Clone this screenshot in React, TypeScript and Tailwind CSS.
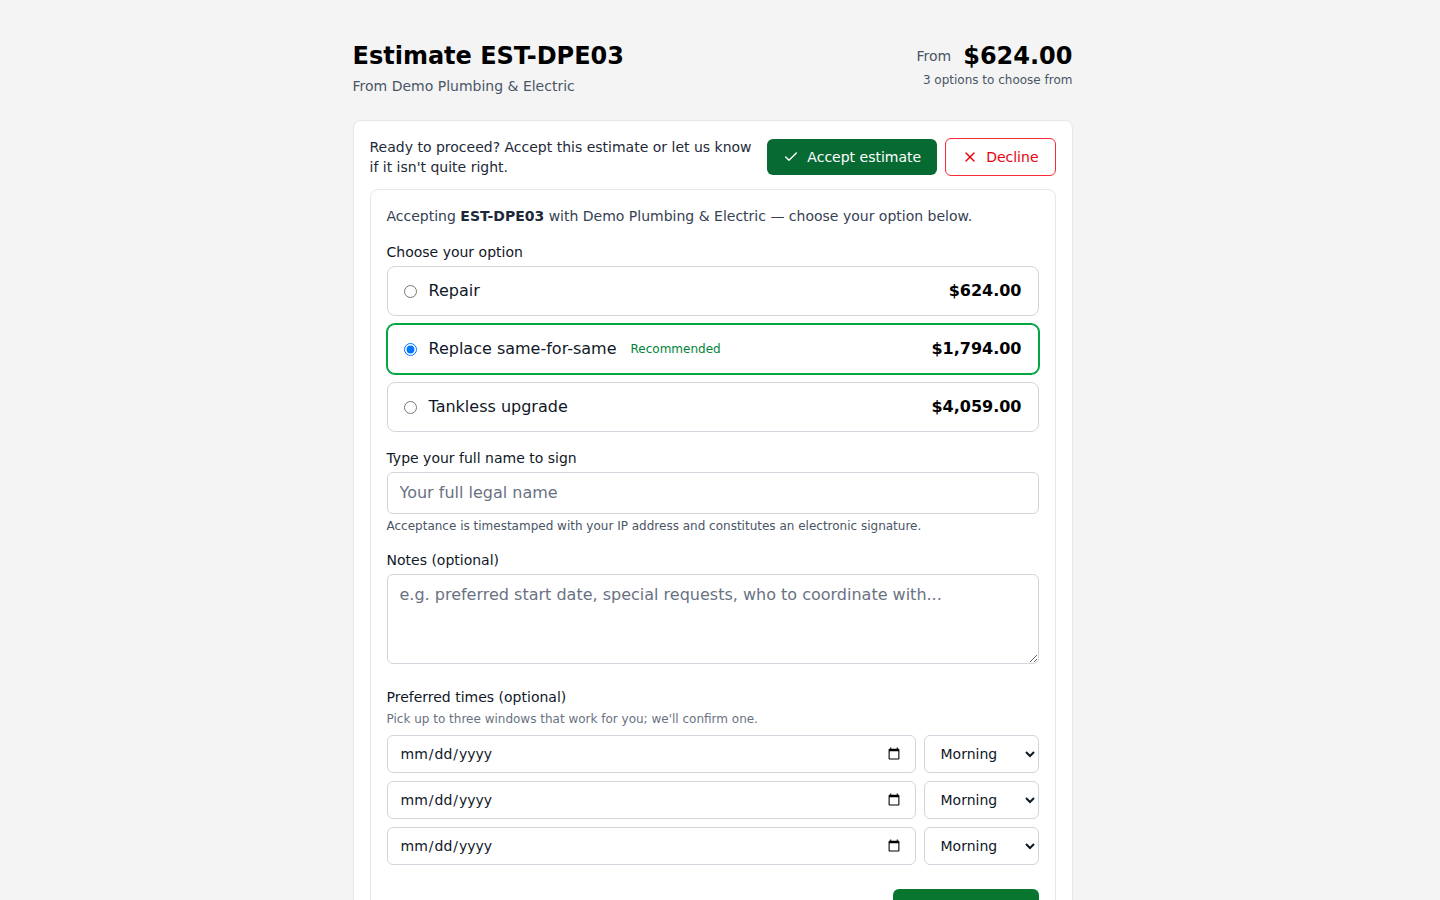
import { Check, X } from "lucide-react";

const options = [
  { id: "repair", name: "Repair", price: "$624.00", recommended: false },
  { id: "replace", name: "Replace same-for-same", price: "$1,794.00", recommended: true },
  { id: "tankless", name: "Tankless upgrade", price: "$4,059.00", recommended: false },
];

const details = [
  {
    name: "Repair",
    price: "$624.00",
    items: [
      ["Diagnostic & service call", "$89.00"],
      ["Replace thermocouple and gas valve", "$385.00"],
      ["Flush tank, test relief valve", "$150.00"],
    ],
  },
  {
    name: "Replace same-for-same",
    price: "$1,794.00",
    items: [
      ["50 gal gas water heater", "$1,120.00"],
      ["Installation labor", "$480.00"],
      ["Haul away & disposal of old unit", "$94.00"],
      ["Permit & inspection", "$100.00"],
    ],
  },
  {
    name: "Tankless upgrade",
    price: "$4,059.00",
    items: [
      ["Tankless condensing water heater", "$2,450.00"],
      ["Gas line upsizing", "$640.00"],
      ["Venting kit & installation labor", "$775.00"],
      ["Permit & inspection", "$194.00"],
    ],
  },
];

const TimeRow = () => (
  <div className="flex gap-2">
    <input
      type="date"
      className="h-[38px] flex-1 rounded-md border border-gray-300 bg-white px-3 text-sm text-gray-900"
    />
    <select className="h-[38px] w-[115px] rounded-md border border-gray-300 bg-white px-3 text-sm text-gray-900">
      <option>Morning</option>
      <option>Afternoon</option>
      <option>Evening</option>
    </select>
  </div>
);

export default function App() {
  return (
    <div
      className="h-screen overflow-y-auto bg-[#f4f4f4] pr-[15px] text-gray-900"
      style={{ fontFamily: '"DejaVu Sans", "Noto Sans", sans-serif' }}
    >
      <div className="mx-auto max-w-3xl px-6 pt-10 pb-16">
        <header className="mb-6 flex items-start justify-between">
          <div>
            <h1 className="text-2xl font-bold leading-8 text-black">Estimate EST-DPE03</h1>
            <p className="mt-1 text-sm text-gray-600">From Demo Plumbing &amp; Electric</p>
          </div>
          <div className="text-right">
            <div className="flex items-center justify-end gap-3">
              <span className="text-sm text-gray-600">From</span>
              <span className="text-2xl font-bold leading-8 text-black">$624.00</span>
            </div>
            <p className="text-xs text-gray-600">3 options to choose from</p>
          </div>
        </header>

        <section className="rounded-lg border border-gray-200 bg-white p-4">
          <div className="flex items-center gap-3">
            <p className="flex-1 text-sm leading-5 text-gray-800">
              Ready to proceed? Accept this estimate or let us know if it isn't quite right.
            </p>
            <div className="flex shrink-0 items-center gap-2">
              <button className="flex h-9 items-center gap-2 rounded-md bg-[#086a33] px-4 text-sm text-white">
                <Check size={16} strokeWidth={2} />
                Accept estimate
              </button>
              <button className="flex h-[38px] items-center gap-2 rounded-md border border-red-500 bg-white px-4 text-sm text-red-600">
                <X size={16} strokeWidth={2} />
                Decline
              </button>
            </div>
          </div>

          <div className="mt-3 rounded-lg border border-gray-200 p-4">
            <p className="text-sm leading-5 text-gray-700">
              Accepting <b className="text-gray-800">EST-DPE03</b> with Demo Plumbing &amp; Electric — choose
              your option below.
            </p>

            <p className="mt-4 mb-1 text-sm leading-5 font-medium text-gray-900">Choose your option</p>
            <div className="flex flex-col gap-2">
              {options.map((o) => (
                <label
                  key={o.id}
                  className={
                    o.recommended
                      ? "flex items-center gap-3 rounded-lg border border-green-600 bg-white px-4 py-3 ring-1 ring-green-600"
                      : "flex items-center gap-3 rounded-lg border border-gray-300 bg-white px-4 py-3"
                  }
                >
                  <input type="radio" name="option" defaultChecked={o.recommended} className="h-[13px] w-[13px]" />
                  <span className="text-base leading-6 text-gray-900">{o.name}</span>
                  {o.recommended && <span className="ml-0.5 text-xs text-green-700">Recommended</span>}
                  <span className="ml-auto text-base leading-6 font-bold text-black">{o.price}</span>
                </label>
              ))}
            </div>

            <p className="mt-4 mb-1 text-sm leading-5 font-medium text-gray-900">Type your full name to sign</p>
            <input
              type="text"
              placeholder="Your full legal name"
              className="block w-full rounded-md border border-gray-300 bg-white px-3 py-2 text-base leading-6 placeholder:text-gray-500"
            />
            <p className="mt-1 text-xs leading-4 text-gray-600">
              Acceptance is timestamped with your IP address and constitutes an electronic signature.
            </p>

            <p className="mt-4 mb-1 text-sm leading-5 font-medium text-gray-900">Notes (optional)</p>
            <textarea
              rows={3}
              placeholder="e.g. preferred start date, special requests, who to coordinate with..."
              className="block w-full rounded-md border border-gray-300 bg-white px-3 py-2 text-base leading-6 placeholder:text-gray-500"
            />

            <p className="mt-[23px] text-sm leading-5 font-medium text-gray-900">Preferred times (optional)</p>
            <p className="mt-1 text-xs leading-4 text-gray-500">
              Pick up to three windows that work for you; we'll confirm one.
            </p>
            <div className="mt-2 flex flex-col gap-2">
              <TimeRow />
              <TimeRow />
              <TimeRow />
            </div>

            <div className="mt-6 flex justify-end">
              <button className="flex h-10 w-[146px] items-center justify-center gap-2 rounded-md bg-[#08762f] text-sm text-white">
                <Check size={16} />
                Accept &amp; sign
              </button>
            </div>
          </div>
        </section>

        <h2 className="mt-10 mb-4 text-lg font-bold">Your options</h2>
        <div className="flex flex-col gap-4">
          {details.map((d) => (
            <section key={d.name} className="rounded-lg border border-gray-200 bg-white p-4">
              <div className="flex items-center justify-between">
                <h3 className="text-base font-bold">{d.name}</h3>
                <span className="text-base font-bold">{d.price}</span>
              </div>
              <ul className="mt-3 divide-y divide-gray-100">
                {d.items.map(([label, amount]) => (
                  <li key={label} className="flex justify-between py-3 text-sm text-gray-700">
                    <span>{label}</span>
                    <span>{amount}</span>
                  </li>
                ))}
              </ul>
              <div className="mt-2 flex justify-between border-t border-gray-200 pt-3 text-sm font-bold">
                <span>Total</span>
                <span>{d.price}</span>
              </div>
            </section>
          ))}
        </div>

        <section className="mt-6 rounded-lg border border-gray-200 bg-white p-4">
          <h3 className="text-base font-bold">Terms</h3>
          <p className="mt-2 text-sm leading-6 text-gray-700">
            Prices are valid for 30 days from the date of this estimate. A deposit may be required before work
            is scheduled. All work is guaranteed for one year on labor; manufacturer warranties apply to
            equipment. Additional work discovered during the job will be quoted before it is performed.
          </p>
        </section>

        <p className="mt-8 text-center text-xs text-gray-500">
          Questions? Contact Demo Plumbing &amp; Electric · (555) 010-0199
        </p>
      </div>
    </div>
  );
}
